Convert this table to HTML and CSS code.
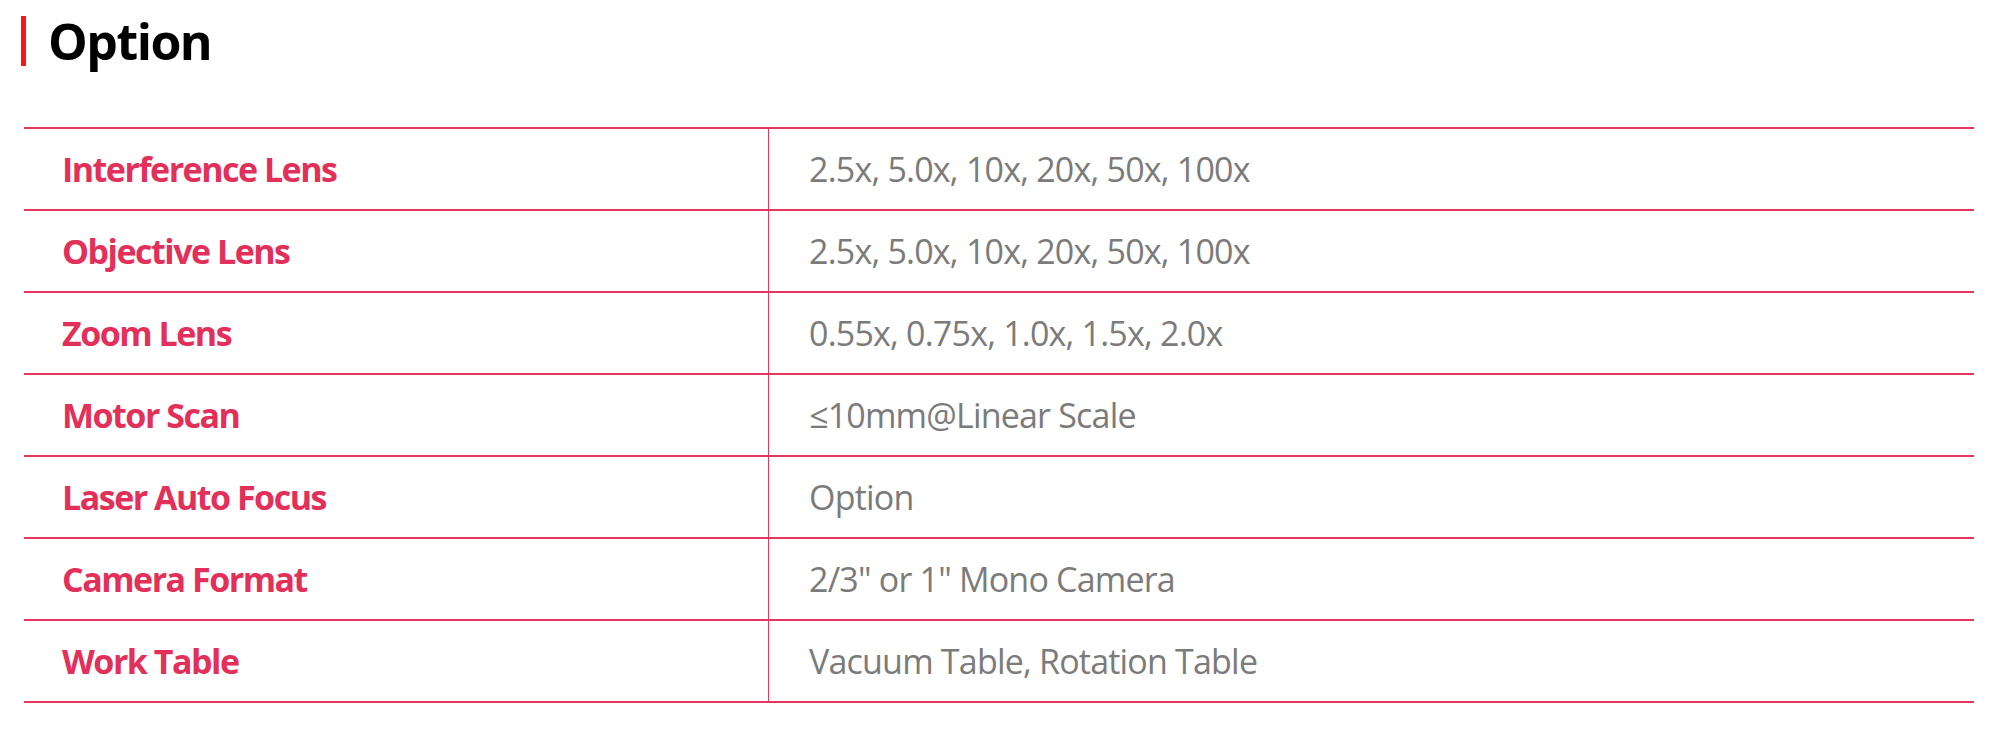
FILE: index.html
```html
<!DOCTYPE html>
<html lang="en">
<head>
<meta charset="utf-8">
<title>Option</title>
<link rel="stylesheet" href="styles.css">
</head>
<body>
<h1 class="heading">Option</h1>
<div class="spec">
  <div class="spec-label">Interference Lens</div>
  <div class="spec-value">2.5x, 5.0x, 10x, 20x, 50x, 100x</div>
  <div class="spec-label">Objective Lens</div>
  <div class="spec-value">2.5x, 5.0x, 10x, 20x, 50x, 100x</div>
  <div class="spec-label">Zoom Lens</div>
  <div class="spec-value">0.55x, 0.75x, 1.0x, 1.5x, 2.0x</div>
  <div class="spec-label">Motor Scan</div>
  <div class="spec-value">≤10mm@Linear Scale</div>
  <div class="spec-label">Laser Auto Focus</div>
  <div class="spec-value">Option</div>
  <div class="spec-label">Camera Format</div>
  <div class="spec-value">2/3" or 1" Mono Camera</div>
  <div class="spec-label">Work Table</div>
  <div class="spec-value">Vacuum Table, Rotation Table</div>
</div>
</body>
</html>
```
FILE: styles.css
```css
html, body {
  margin: 0;
  padding: 0;
  background: #ffffff;
}

body {
  font-family: "Open Sans", "Noto Sans", "Liberation Sans", sans-serif;
}

.heading {
  margin: 16px 0 0 21px;
  padding-left: 22px;
  border-left: 5px solid #ff1414;
  height: 50px;
  line-height: 50px;
  font-size: 50px;
  font-weight: 700;
  letter-spacing: -1.5px;
  color: #000000;
}

.spec {
  display: grid;
  grid-template-columns: 745px 1fr;
  margin: 61px 20px 0 24px;
  border-top: 2px solid #e5365e;
}

.spec-label,
.spec-value {
  display: flex;
  align-items: center;
  height: 80px;
  border-bottom: 2px solid #e5365e;
}

.spec-label {
  padding-left: 38px;
  border-right: 1px solid #e5365e;
  font-size: 34px;
  font-weight: 700;
  letter-spacing: -1.5px;
  color: #e3305a;
}

.spec-value {
  padding-left: 40px;
  font-size: 34px;
  font-weight: 400;
  letter-spacing: -0.8px;
  color: #7b7b7b;
}
```
